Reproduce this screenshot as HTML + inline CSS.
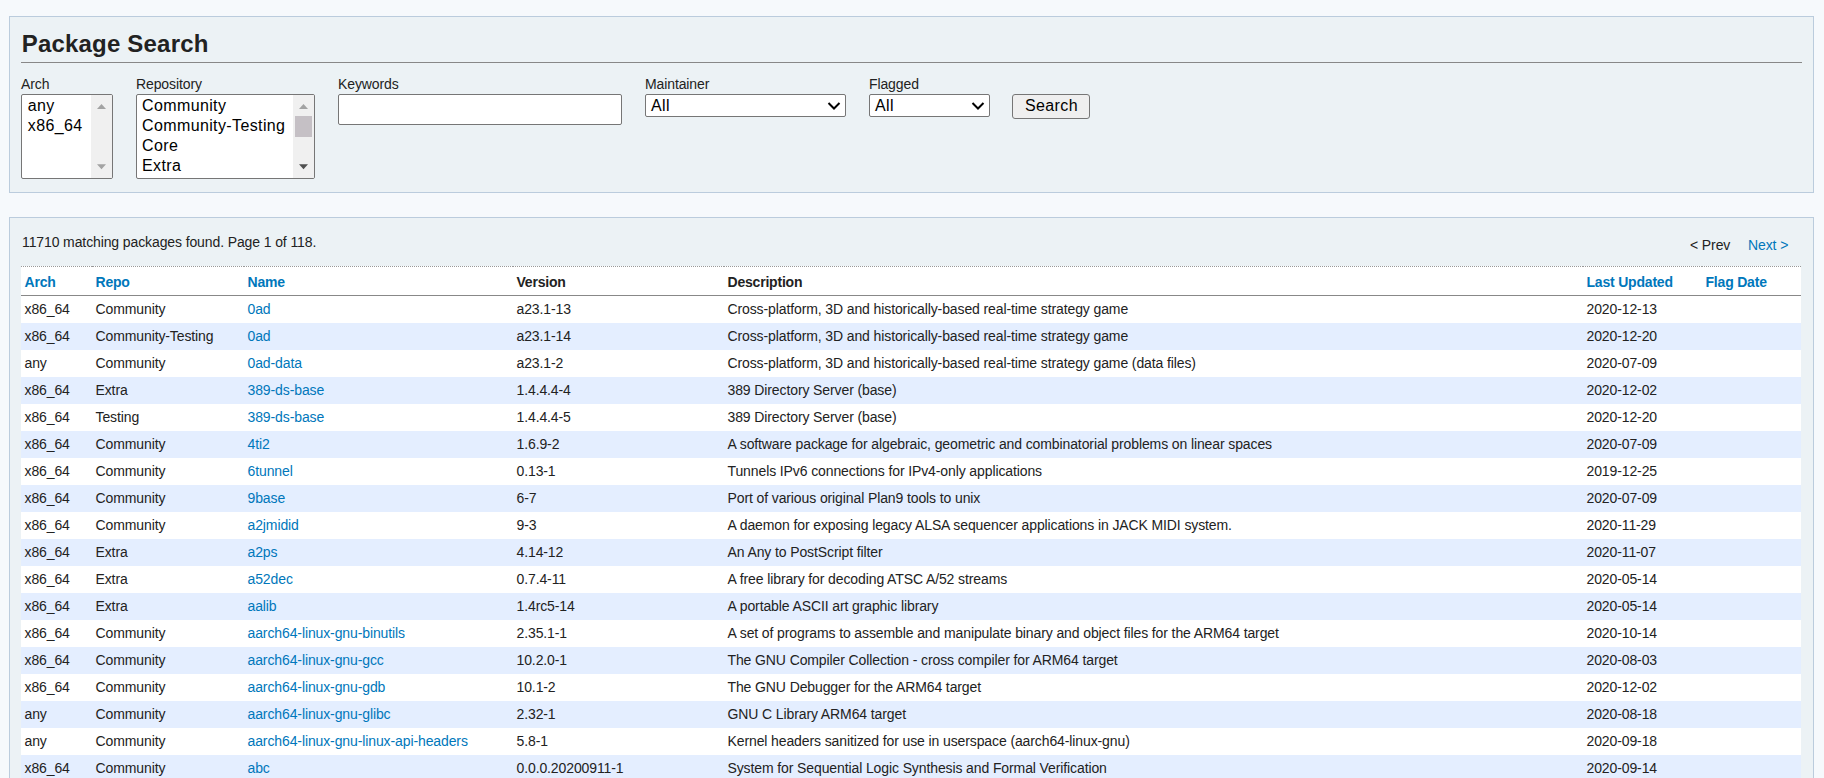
<!DOCTYPE html>
<html><head><meta charset="utf-8">
<style>
*{box-sizing:border-box;margin:0;padding:0}
html,body{width:1824px;height:778px;overflow:hidden;background:#f6f9fc;font-family:"Liberation Sans",sans-serif;color:#222}
.box{position:absolute;left:9px;width:1805px;background:#ecf2f5;border:1px solid #bcd}
#b1{top:16px;height:177px}
#b2{top:217px;height:600px}
.abs{position:absolute;white-space:nowrap}
.t{font-size:14px;letter-spacing:-0.11px;line-height:16px;color:#222}
h2{position:absolute;left:11px;top:13px;width:1781px;height:33px;padding-left:0.7px;font-size:24px;letter-spacing:0.2px;font-weight:bold;line-height:28px;border-bottom:1px solid #888;color:#222}
.lbl{position:absolute;top:59px}
.ctl{position:absolute;top:77px;background:#fff;border:1px solid #767676;border-radius:2px;overflow:hidden}
.opt{position:absolute;left:5px;font-size:16px;letter-spacing:0.38px;line-height:20px;color:#000;white-space:nowrap}
.sb{position:absolute;top:0;right:0;width:21px;bottom:0;background:#f0f0f0}
.sb svg{position:absolute;left:0;top:0}
table{position:absolute;left:11px;top:48px;width:1780px;border-collapse:collapse;table-layout:fixed;background:#fff;font-size:14px;letter-spacing:-0.11px;border-top:1px dotted #999}
th{font-weight:bold;text-align:left;padding:2px 0 0 3.5px;height:29px;border-bottom:1px solid #888;color:#222;white-space:nowrap;letter-spacing:-0.2px}
th.s{color:#07b}
td{padding:0 0 0 3.5px;height:27px;white-space:nowrap;color:#222}
tr.e td{background:#e4eeff}
a{color:#07b;text-decoration:none}
</style></head><body>
<div class="box" id="b1">
  <h2>Package Search</h2>
  <div class="lbl t" style="left:11px">Arch</div>
  <div class="ctl" style="left:11px;width:92px;height:85px">
    <div class="opt" style="left:5.8px;top:1px">any</div>
    <div class="opt" style="left:5.8px;top:21px">x86_64</div>
    <div class="sb"><svg width="21" height="83"><path d="M6 14 L15 14 L10.5 9 Z" fill="#a3a3a3"/><path d="M6 69.3 L15 69.3 L10.5 74.3 Z" fill="#a3a3a3"/></svg></div>
  </div>
  <div class="lbl t" style="left:126px">Repository</div>
  <div class="ctl" style="left:126px;width:179px;height:85px">
    <div class="opt" style="top:1px">Community</div>
    <div class="opt" style="top:21px">Community-Testing</div>
    <div class="opt" style="top:41px">Core</div>
    <div class="opt" style="top:61px">Extra</div>
    <div class="sb"><svg width="21" height="83"><path d="M6 14 L15 14 L10.5 9 Z" fill="#a3a3a3"/><rect x="2" y="21" width="17" height="21" fill="#c5c0c5"/><path d="M6 69.3 L15 69.3 L10.5 74.3 Z" fill="#505050"/></svg></div>
  </div>
  <div class="lbl t" style="left:328px">Keywords</div>
  <div class="ctl" style="left:328px;width:284px;height:31px"></div>
  <div class="lbl t" style="left:635px">Maintainer</div>
  <div class="ctl" style="left:635px;width:201px;height:23px">
    <div class="opt" style="top:1px">All</div>
    <svg class="abs" style="left:180px;top:6px" width="16" height="10"><path d="M2.5 2 L8 7.5 L13.5 2" fill="none" stroke="#000" stroke-width="2"/></svg>
  </div>
  <div class="lbl t" style="left:859px">Flagged</div>
  <div class="ctl" style="left:859px;width:121px;height:23px">
    <div class="opt" style="top:1px">All</div>
    <svg class="abs" style="left:100px;top:6px" width="16" height="10"><path d="M2.5 2 L8 7.5 L13.5 2" fill="none" stroke="#000" stroke-width="2"/></svg>
  </div>
  <div class="ctl" style="left:1002px;width:78px;height:25px;background:#efefef;border-radius:3px">
    <div class="opt" style="left:12px;top:1px">Search</div>
  </div>
</div>
<div class="box" id="b2">
  <div class="abs t" style="left:12px;top:16px">11710 matching packages found. Page 1 of 118.</div>
  <div class="abs t" style="left:1680px;top:19px">&lt; Prev</div>
  <div class="abs t" style="left:1738px;top:19px"><a>Next &gt;</a></div>
  <table>
    <colgroup><col style="width:71px"><col style="width:152px"><col style="width:269px"><col style="width:211px"><col style="width:859px"><col style="width:119px"><col></colgroup>
    <tr><th class="s">Arch</th><th class="s">Repo</th><th class="s">Name</th><th>Version</th><th>Description</th><th class="s">Last Updated</th><th class="s">Flag Date</th></tr>
<tr><td>x86_64</td><td>Community</td><td><a>0ad</a></td><td>a23.1-13</td><td>Cross-platform, 3D and historically-based real-time strategy game</td><td>2020-12-13</td><td></td></tr>
<tr class="e"><td>x86_64</td><td>Community-Testing</td><td><a>0ad</a></td><td>a23.1-14</td><td>Cross-platform, 3D and historically-based real-time strategy game</td><td>2020-12-20</td><td></td></tr>
<tr><td>any</td><td>Community</td><td><a>0ad-data</a></td><td>a23.1-2</td><td>Cross-platform, 3D and historically-based real-time strategy game (data files)</td><td>2020-07-09</td><td></td></tr>
<tr class="e"><td>x86_64</td><td>Extra</td><td><a>389-ds-base</a></td><td>1.4.4.4-4</td><td>389 Directory Server (base)</td><td>2020-12-02</td><td></td></tr>
<tr><td>x86_64</td><td>Testing</td><td><a>389-ds-base</a></td><td>1.4.4.4-5</td><td>389 Directory Server (base)</td><td>2020-12-20</td><td></td></tr>
<tr class="e"><td>x86_64</td><td>Community</td><td><a>4ti2</a></td><td>1.6.9-2</td><td>A software package for algebraic, geometric and combinatorial problems on linear spaces</td><td>2020-07-09</td><td></td></tr>
<tr><td>x86_64</td><td>Community</td><td><a>6tunnel</a></td><td>0.13-1</td><td>Tunnels IPv6 connections for IPv4-only applications</td><td>2019-12-25</td><td></td></tr>
<tr class="e"><td>x86_64</td><td>Community</td><td><a>9base</a></td><td>6-7</td><td>Port of various original Plan9 tools to unix</td><td>2020-07-09</td><td></td></tr>
<tr><td>x86_64</td><td>Community</td><td><a>a2jmidid</a></td><td>9-3</td><td>A daemon for exposing legacy ALSA sequencer applications in JACK MIDI system.</td><td>2020-11-29</td><td></td></tr>
<tr class="e"><td>x86_64</td><td>Extra</td><td><a>a2ps</a></td><td>4.14-12</td><td>An Any to PostScript filter</td><td>2020-11-07</td><td></td></tr>
<tr><td>x86_64</td><td>Extra</td><td><a>a52dec</a></td><td>0.7.4-11</td><td>A free library for decoding ATSC A/52 streams</td><td>2020-05-14</td><td></td></tr>
<tr class="e"><td>x86_64</td><td>Extra</td><td><a>aalib</a></td><td>1.4rc5-14</td><td>A portable ASCII art graphic library</td><td>2020-05-14</td><td></td></tr>
<tr><td>x86_64</td><td>Community</td><td><a>aarch64-linux-gnu-binutils</a></td><td>2.35.1-1</td><td>A set of programs to assemble and manipulate binary and object files for the ARM64 target</td><td>2020-10-14</td><td></td></tr>
<tr class="e"><td>x86_64</td><td>Community</td><td><a>aarch64-linux-gnu-gcc</a></td><td>10.2.0-1</td><td>The GNU Compiler Collection - cross compiler for ARM64 target</td><td>2020-08-03</td><td></td></tr>
<tr><td>x86_64</td><td>Community</td><td><a>aarch64-linux-gnu-gdb</a></td><td>10.1-2</td><td>The GNU Debugger for the ARM64 target</td><td>2020-12-02</td><td></td></tr>
<tr class="e"><td>any</td><td>Community</td><td><a>aarch64-linux-gnu-glibc</a></td><td>2.32-1</td><td>GNU C Library ARM64 target</td><td>2020-08-18</td><td></td></tr>
<tr><td>any</td><td>Community</td><td><a>aarch64-linux-gnu-linux-api-headers</a></td><td>5.8-1</td><td>Kernel headers sanitized for use in userspace (aarch64-linux-gnu)</td><td>2020-09-18</td><td></td></tr>
<tr class="e"><td>x86_64</td><td>Community</td><td><a>abc</a></td><td>0.0.0.20200911-1</td><td>System for Sequential Logic Synthesis and Formal Verification</td><td>2020-09-14</td><td></td></tr>
<tr><td>x86_64</td><td>Community</td><td><a>abcde</a></td><td>2.9.3-2</td><td>Frontend command-line utility that grabs tracks off a CD</td><td>2020-07-09</td><td></td></tr>
  </table>
</div>
</body></html>
